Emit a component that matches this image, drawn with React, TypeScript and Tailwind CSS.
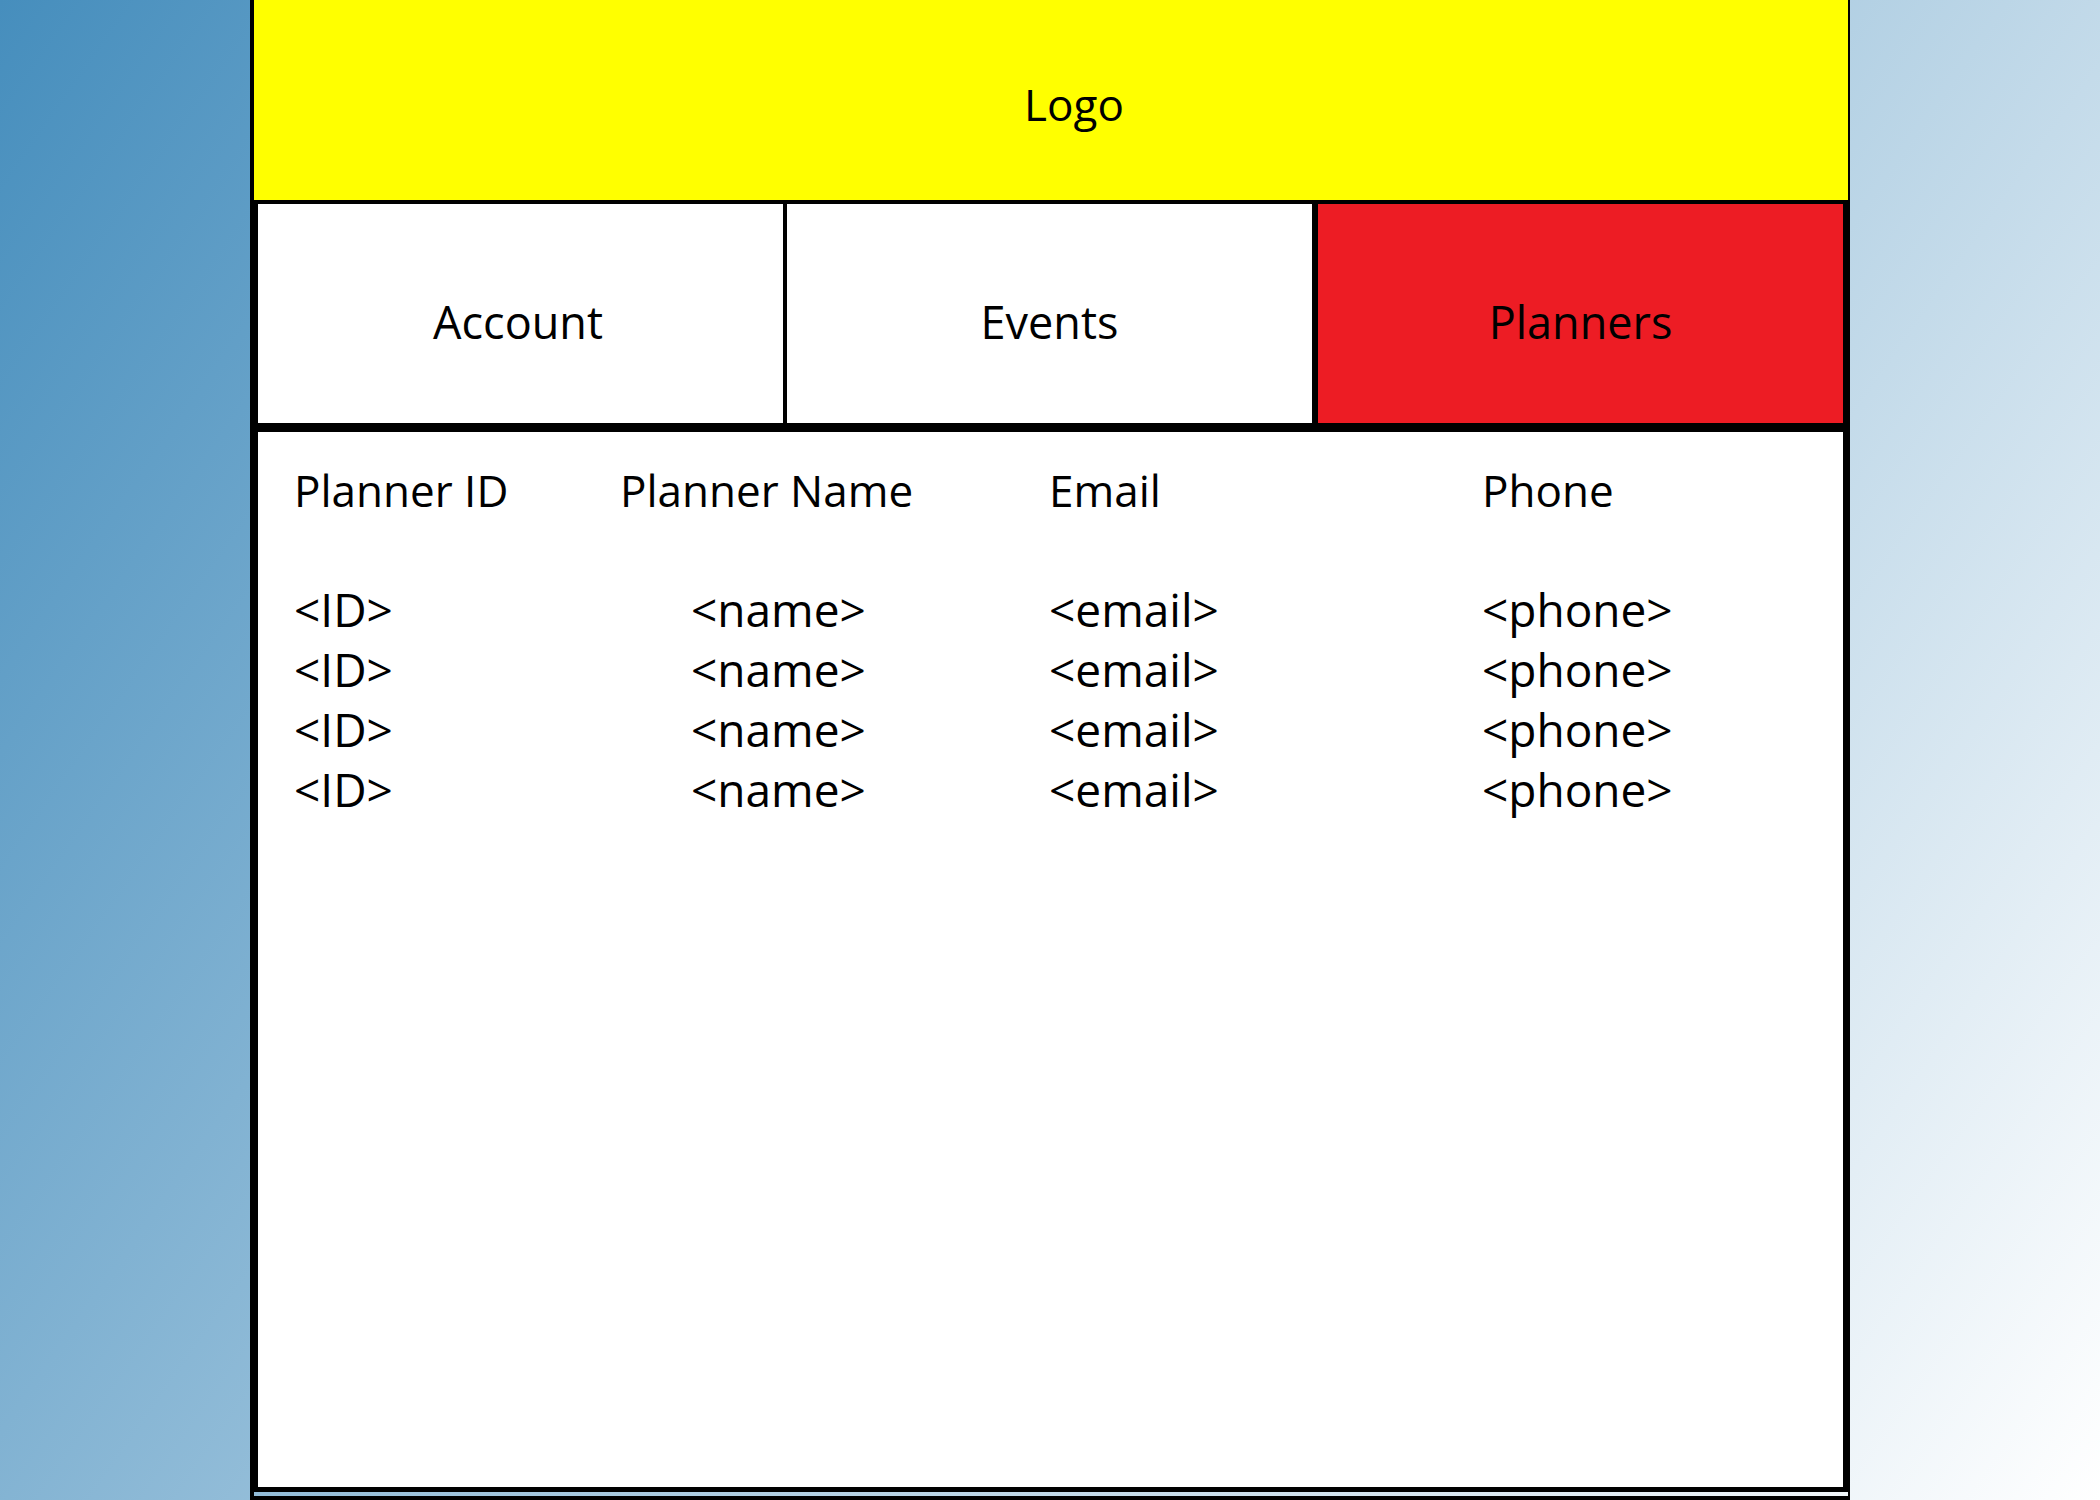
const planners = [
  { id: '<ID>', name: '<name>', email: '<email>', phone: '<phone>' },
  { id: '<ID>', name: '<name>', email: '<email>', phone: '<phone>' },
  { id: '<ID>', name: '<name>', email: '<email>', phone: '<phone>' },
  { id: '<ID>', name: '<name>', email: '<email>', phone: '<phone>' },
]

const cols = 'grid grid-cols-[326px_429px_433px_1fr]'

export default function App() {
  return (
    <div
      className="flex h-[1500px] w-full bg-[linear-gradient(125deg,#468ebd_0%,#ffffff_100%)] pl-[250px] text-black"
      style={{ fontFamily: '"Open Sans", "Noto Sans", sans-serif' }}
    >
      <div className="flex w-[1600px] flex-col border-l-4 border-r-2 border-black">
        {/* Logo bar */}
        <div className="flex h-[204px] shrink-0 items-center justify-center border-b-4 border-black bg-[#ffff00] pl-[46px] pt-[7px]">
          <span className="text-[44px] leading-none">Logo</span>
        </div>

        <div className="flex flex-col border-l-4 border-r-[5px] border-black">
          {/* Tabs */}
          <div className="grid h-[228px] grid-cols-[529px_531px_1fr] border-b-[9px] border-black">
            <div className="flex items-center justify-center border-r-4 border-black bg-white pt-[15px]">
              <span className="-ml-[5px] text-[45px] leading-none">Account</span>
            </div>
            <div className="flex items-center justify-center border-r-[6px] border-black bg-white pt-[15px]">
              <span className="text-[45px] leading-none">Events</span>
            </div>
            <div className="flex items-center justify-center bg-[#ed1c24] pt-[15px]">
              <span className="text-[45px] leading-none">Planners</span>
            </div>
          </div>

          {/* Planner table */}
          <div className="h-[1060px] border-b-[5px] border-black bg-white pl-[36px] pt-[28px]">
            <div className={`${cols} text-[44px] leading-[60px]`}>
              <div>Planner ID</div>
              <div>Planner Name</div>
              <div>Email</div>
              <div>Phone</div>
            </div>
            <div className="mt-[59px] flex flex-col text-[46px] leading-[60px]">
              {planners.map((p, i) => (
                <div key={i} className={cols}>
                  <div>{p.id}</div>
                  <div className="pl-[71px]">{p.name}</div>
                  <div>{p.email}</div>
                  <div>{p.phone}</div>
                </div>
              ))}
            </div>
          </div>
        </div>

        <div className="h-[4px] shrink-0" />
        <div className="h-[4px] shrink-0 bg-black" />
      </div>
    </div>
  )
}
